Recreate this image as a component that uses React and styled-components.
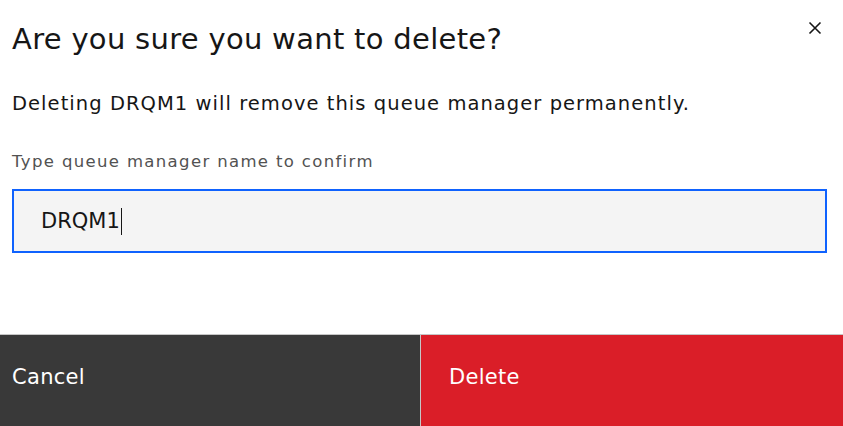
import React from "react";
import styled, { createGlobalStyle } from "styled-components";

const Global = createGlobalStyle`
  html, body { margin: 0; padding: 0; background: #ffffff; }
  body { font-family: "DejaVu Sans", "Liberation Sans", sans-serif; color: #161616; }
  * { box-sizing: border-box; }
`;

const Modal = styled.div`
  width: 843px;
  height: 426px;
  display: flex;
  flex-direction: column;
  background: #ffffff;
  position: relative;
`;

const Header = styled.div`
  padding: 19px 12px 0 12px;
`;

const Title = styled.h2`
  margin: 0;
  font-family: "DejaVu Sans", sans-serif;
  font-weight: 400;
  font-size: 29px;
  letter-spacing: 0.3px;
  line-height: 40px;
  color: #161616;
`;

const Close = styled.button`
  position: absolute;
  top: 14px;
  right: 14px;
  width: 28px;
  height: 28px;
  border: 0;
  background: transparent;
  padding: 0;
  display: flex;
  align-items: center;
  justify-content: center;
  cursor: pointer;
`;

const Body = styled.div`
  flex: 1;
  padding: 0 16px 0 12px;
  display: flex;
  flex-direction: column;
`;

const Message = styled.p`
  margin: 31px 0 0 0;
  font-size: 19.5px;
  letter-spacing: 1.05px;
  line-height: 28px;
  color: #161616;
`;

const Label = styled.label`
  display: block;
  margin-top: 34px;
  font-size: 16.5px;
  letter-spacing: 1.35px;
  line-height: 20px;
  color: #525252;
`;

const InputWrap = styled.div`
  position: relative;
  margin-top: 17px;
  width: 815px;
`;

const Input = styled.input`
  display: block;
  width: 815px;
  height: 64px;
  border: 2px solid #0f62fe;
  background: #f4f4f4;
  padding: 0 0 0 27px;
  font-family: "DejaVu Sans", sans-serif;
  font-size: 21px;
  color: #161616;
  outline: none;
  caret-color: transparent;
`;

const Caret = styled.span`
  position: absolute;
  left: 109px;
  top: 19px;
  width: 1px;
  height: 27px;
  background: #161616;
  pointer-events: none;
`;

const Footer = styled.div`
  display: grid;
  grid-template-columns: 420px 1px 1fr;
  height: 92px;
  border-top: 1px solid #c6c6c6;
`;

const Divider = styled.div`
  background: #c6c6c6;
`;

const FooterButton = styled.button`
  border: 0;
  margin: 0;
  display: flex;
  align-items: flex-start;
  padding: 28px 0 0 ${(p) => p.$pad}px;
  background: ${(p) => (p.$danger ? "#da1e28" : "#393939")};
  color: #ffffff;
  font-family: "DejaVu Sans", sans-serif;
  font-size: 21px;
  letter-spacing: 0.3px;
  line-height: 28px;
  text-align: left;
  cursor: pointer;
`;

export default function App() {
  return (
    <>
      <Global />
      <Modal>
        <Header>
          <Title>Are you sure you want to delete?</Title>
        </Header>
        <Close aria-label="Close">
          <svg width="14" height="14" viewBox="0 0 14 14">
            <path d="M1.5 1.5 L12.5 12.5 M12.5 1.5 L1.5 12.5" stroke="#161616" strokeWidth="1.6" fill="none" />
          </svg>
        </Close>
        <Body>
          <Message>Deleting DRQM1 will remove this queue manager permanently.</Message>
          <Label htmlFor="qm">Type queue manager name to confirm</Label>
          <InputWrap>
            <Input id="qm" defaultValue="DRQM1" />
            <Caret />
          </InputWrap>
        </Body>
        <Footer>
          <FooterButton $pad={12}>Cancel</FooterButton>
          <Divider />
          <FooterButton $danger $pad={28}>Delete</FooterButton>
        </Footer>
      </Modal>
    </>
  );
}
